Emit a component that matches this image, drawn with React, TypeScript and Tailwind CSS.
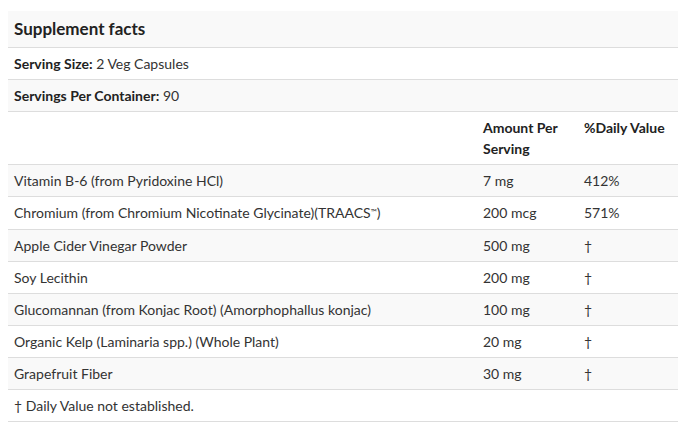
import React from "react";

const rows: { name: React.ReactNode; amount: string; dv: string; extra?: string }[] = [
  { name: "Vitamin B-6 (from Pyridoxine HCl)", amount: "7 mg", dv: "412%" },
  {
    name: (
      <>
        Chromium (from Chromium Nicotinate Glycinate)(TRAACS
        <sup className="text-[8px] leading-none relative top-[-3px]">™</sup>)
      </>
    ),
    amount: "200 mcg",
    dv: "571%",
    extra: " pb-[6px]",
  },
  { name: "Apple Cider Vinegar Powder", amount: "500 mg", dv: "†" },
  { name: "Soy Lecithin", amount: "200 mg", dv: "†" },
  { name: "Glucomannan (from Konjac Root) (Amorphophallus konjac)", amount: "100 mg", dv: "†" },
  { name: "Organic Kelp (Laminaria spp.) (Whole Plant)", amount: "20 mg", dv: "†" },
  { name: "Grapefruit Fiber", amount: "30 mg", dv: "†" },
];

export default function App() {
  const td = "px-[6px] py-[5px] leading-[21px] border-b border-[#dddddd] align-top";
  return (
    <div className="w-[696px] h-[445px] bg-white pt-[11px] pl-[8px] text-[14px] text-[#333333]" style={{ fontFamily: "Lato, 'Open Sans', sans-serif" }}>
      <table className="w-[670px] border-collapse table-fixed">
        <colgroup>
          <col className="w-[469px]" />
          <col className="w-[101px]" />
          <col className="w-[100px]" />
        </colgroup>
        <tbody>
          <tr className="bg-[#f9f9f9]">
            <td colSpan={3} className="px-[6px] py-[6px] leading-[24px] border-b border-[#dddddd] text-[17px] font-bold text-[#222222]">
              Supplement facts
            </td>
          </tr>
          <tr className="bg-white">
            <td colSpan={3} className={td}>
              <span className="font-bold text-[#222222]">Serving Size:</span> 2 Veg Capsules
            </td>
          </tr>
          <tr className="bg-[#f9f9f9]">
            <td colSpan={3} className={td}>
              <span className="font-bold text-[#222222]">Servings Per Container:</span> 90
            </td>
          </tr>
          <tr className="bg-white">
            <td className={td}></td>
            <td className={td + " font-bold text-[#222222]"}>Amount Per Serving</td>
            <td className={td + " font-bold text-[#222222]"}>%Daily Value</td>
          </tr>
          {rows.map((r, i) => (
            <tr key={i} className={i % 2 === 0 ? "bg-[#f9f9f9]" : "bg-white"}>
              <td className={td + (r.extra ?? "")}>{r.name}</td>
              <td className={td}>{r.amount}</td>
              <td className={td}>{r.dv}</td>
            </tr>
          ))}
          <tr className="bg-white">
            <td colSpan={3} className={td}>† Daily Value not established.</td>
          </tr>
        </tbody>
      </table>
    </div>
  );
}
